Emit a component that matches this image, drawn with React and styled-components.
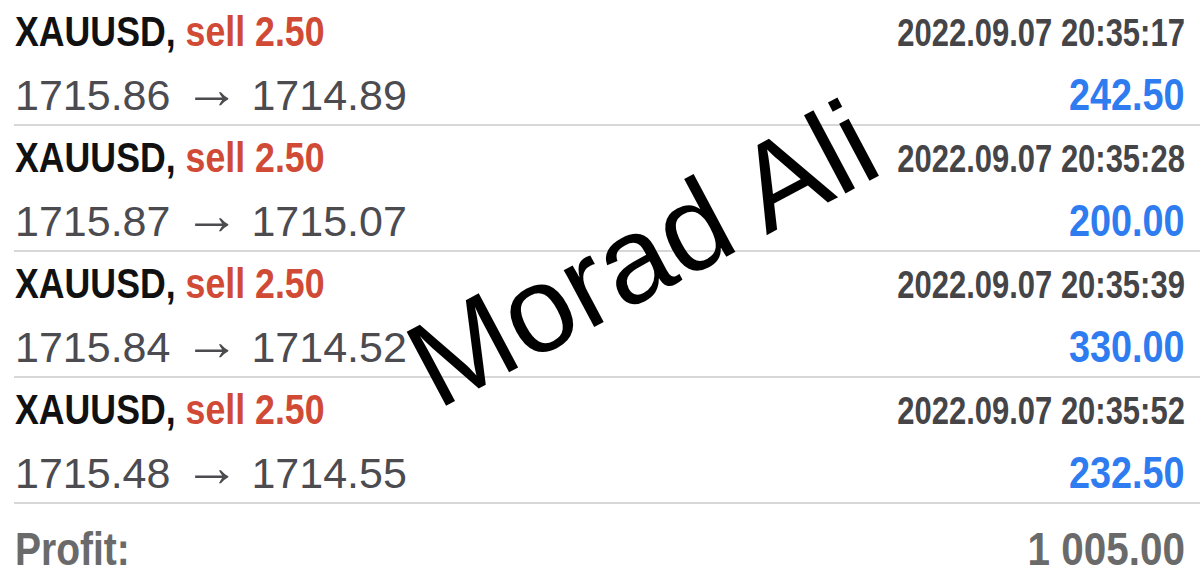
import React from "react";
import styled, { createGlobalStyle } from "styled-components";

const GlobalStyle = createGlobalStyle`
  html, body {
    margin: 0;
    padding: 0;
    background: #ffffff;
  }
  body {
    font-family: "Liberation Sans", Arial, sans-serif;
    overflow: hidden;
  }
`;

const deals = [
  { open: "1715.86", close: "1714.89", time: "2022.09.07 20:35:17", profit: "242.50" },
  { open: "1715.87", close: "1715.07", time: "2022.09.07 20:35:28", profit: "200.00" },
  { open: "1715.84", close: "1714.52", time: "2022.09.07 20:35:39", profit: "330.00" },
  { open: "1715.48", close: "1714.55", time: "2022.09.07 20:35:52", profit: "232.50" },
];

const Screen = styled.div`
  position: relative;
  width: 1200px;
  height: 581px;
  overflow: hidden;
  background: #fff;
`;

const Row = styled.div`
  margin-left: 14px;
  padding: 7px 15px 0 1px;
  height: 126px;
  box-sizing: border-box;
  display: flex;
  flex-direction: column;
  gap: 10px;
  border-bottom: 2px solid #d7d7d7;
`;

const Line = styled.div`
  display: flex;
  justify-content: space-between;
  align-items: baseline;
  height: ${(p) => p.$h}px;
  line-height: ${(p) => p.$h}px;
  white-space: nowrap;
`;

/* no condensed face installed, so squeeze the bold text horizontally */
const Condensed = styled.span`
  display: inline-block;
  font-family: "Liberation Sans", Arial, sans-serif;
  font-weight: 700;
  transform: scaleX(${(p) => p.$sx || 0.83});
  transform-origin: ${(p) => (p.$right ? "right" : "left")} center;
`;

const Symbol = styled(Condensed)`
  font-size: 42px;
  color: #111;
`;

const Side = styled.span`
  color: #d04a36;
`;

const Time = styled(Condensed)`
  font-size: 38px;
  color: #454548;
`;

const Prices = styled.span`
  font-family: "Liberation Sans", Arial, sans-serif;
  font-size: 43px;
  color: #4b4b50;
`;

const Arrow = styled.span`
  display: inline-block;
  font-size: 56px;
  line-height: 0;
  margin: 0 12px 0 13px;
  position: relative;
  top: -2px;
`;

const Amount = styled(Condensed)`
  font-size: 45px;
  color: #2f7cf0;
`;

const Total = styled.div`
  margin-left: 14px;
  padding: 15px 15px 0 1px;
  display: flex;
  justify-content: space-between;
  align-items: baseline;
  line-height: 60px;
`;

const TotalText = styled(Condensed)`
  font-size: 47px;
  color: #6a6a6a;
`;

const Watermark = styled.div`
  position: absolute;
  left: 642px;
  top: 254px;
  transform: translate(-50%, -50%) rotate(-28deg);
  font-family: "Liberation Sans", Arial, sans-serif;
  font-size: 122px;
  line-height: 1;
  color: #000;
  white-space: nowrap;
  pointer-events: none;
`;

export default function App() {
  return (
    <Screen>
      <GlobalStyle />
      {deals.map((d) => (
        <Row key={d.time}>
          <Line $h={50}>
            <Symbol $sx={0.85}>
              XAUUSD, <Side>sell 2.50</Side>
            </Symbol>
            <Time $right $sx={0.815}>{d.time}</Time>
          </Line>
          <Line $h={56}>
            <Prices>
              {d.open}
              <Arrow>→</Arrow>
              {d.close}
            </Prices>
            <Amount $right $sx={0.84}>{d.profit}</Amount>
          </Line>
        </Row>
      ))}
      <Total>
        <TotalText $sx={0.83}>Profit:</TotalText>
        <TotalText $right $sx={0.86}>1 005.00</TotalText>
      </Total>
      <Watermark>Morad Ali</Watermark>
    </Screen>
  );
}
